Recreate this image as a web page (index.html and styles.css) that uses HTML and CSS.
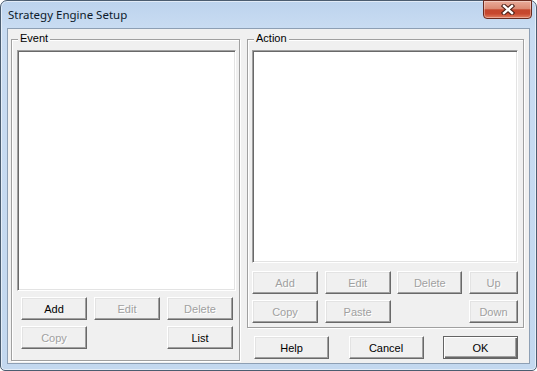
FILE: index.html
```html
<!DOCTYPE html>
<html lang="en">
<head>
    <meta charset="UTF-8">
    <title>Strategy Engine Setup</title>
    <link rel="stylesheet" href="styles.css">
</head>
<body>
    <div class="window">
        <div class="titlebar">
            <span class="title">Strategy Engine Setup</span>
            <button class="close" aria-label="Close">
                <svg width="14" height="11" viewBox="0 0 14 11">
                    <path d="M3 2 L11 9 M11 2 L3 9" stroke="#4a1e16" stroke-width="4.4" stroke-linecap="square"/>
                    <path d="M3 2 L11 9 M11 2 L3 9" stroke="#ffffff" stroke-width="2.4" stroke-linecap="square"/>
                </svg>
            </button>
        </div>

        <div class="client">
            <!-- Event group -->
            <div class="group group-event">
                <span class="caption">Event</span>
                <div class="listbox list-event"></div>
                <div class="btn-grid grid-event">
                    <button class="btn">Add</button>
                    <button class="btn" disabled>Edit</button>
                    <button class="btn" disabled>Delete</button>
                    <button class="btn" disabled>Copy</button>
                    <button class="btn col-3">List</button>
                </div>
            </div>

            <div class="right-col">
                <!-- Action group -->
                <div class="group group-action">
                    <span class="caption">Action</span>
                    <div class="listbox list-action"></div>
                    <div class="btn-grid grid-action">
                        <button class="btn" disabled>Add</button>
                        <button class="btn" disabled>Edit</button>
                        <button class="btn" disabled>Delete</button>
                        <button class="btn" disabled>Up</button>
                        <button class="btn" disabled>Copy</button>
                        <button class="btn" disabled>Paste</button>
                        <button class="btn col-4" disabled>Down</button>
                    </div>
                </div>

                <div class="dialog-buttons">
                    <button class="btn wide">Help</button>
                    <button class="btn wide">Cancel</button>
                    <button class="btn wide default">OK</button>
                </div>
            </div>
        </div>
    </div>
</body>
</html>
```

FILE: styles.css
```css
* {
    box-sizing: border-box;
}
body {
    margin: 0;
    font-family: "Liberation Sans", Arial, sans-serif;
    font-size: 11px;
}

/* window frame */
.window {
    width: 537px;
    height: 371px;
    border: 1px solid #4b5d70;
    border-radius: 7px 7px 5px 5px;
    background: linear-gradient(#bcd3ed, #c9dcf2 28px, #c3d8ef);
    box-shadow: inset 0 0 0 1px rgba(255, 255, 255, 0.55);
    padding: 0 6px 6px;
    display: flex;
    flex-direction: column;
}
.titlebar {
    height: 27px;
    display: flex;
    align-items: flex-start;
    justify-content: space-between;
}
.title {
    font-family: "Noto Sans", sans-serif;
    font-size: 11.5px;
    line-height: 16px;
    color: #0d1a2b;
    margin: 6px 0 0 1px;
}
.close {
    width: 49px;
    height: 19px;
    margin: -1px -2px 0 0;
    padding: 0;
    border: 1px solid #6a2a1f;
    border-radius: 0 0 4px 4px;
    background: linear-gradient(#e9ab9a, #db8a74 45%, #c4472e 52%, #c7482f 75%, #e28062);
    box-shadow: inset 0 0 0 1px rgba(255, 255, 255, 0.35);
    display: flex;
    align-items: center;
    justify-content: center;
}

/* client area */
.client {
    flex: 1;
    background: #f0f0f0;
    border: 1px solid #8d9fb4;
    padding: 10px 5px 1px 3px;
    display: flex;
    align-items: flex-start;
    gap: 7px;
}
.right-col {
    flex: 1;
    display: flex;
    flex-direction: column;
}

/* etched group box */
.group {
    position: relative;
    border: 1px solid #a0a0a0;
    box-shadow: inset 1px 1px 0 #fff, 1px 1px 0 #fff;
}
.caption {
    position: absolute;
    top: -8px;
    left: 6px;
    padding: 0 2px;
    line-height: 13px;
    background: #f0f0f0;
    color: #000;
}
.group-event {
    width: 229px;
    padding: 10px 3px 11px 5px;
}
.group-action {
    padding: 10px 5px 4px 4px;
}

/* sunken list box */
.listbox {
    background: #fff;
    border: 1px solid;
    border-color: #a0a0a0 #fff #fff #a0a0a0;
    box-shadow: inset 1px 1px 0 #696969, inset -1px -1px 0 #e3e3e3;
}
.list-event {
    width: 219px;
    height: 241px;
}
.list-action {
    width: 266px;
    height: 213px;
}

.btn-grid {
    display: grid;
    grid-auto-rows: 23px;
    row-gap: 6px;
    justify-content: space-between;
}
.grid-event {
    grid-template-columns: 66px 66px 66px;
    margin: 6px 3px 0 4px;
}
.grid-action {
    grid-template-columns: 66px 66px 65px 49px;
    margin-top: 8px;
}
.col-3 {
    grid-column: 3;
}
.col-4 {
    grid-column: 4;
}

/* classic 3d push button */
.btn {
    font: inherit;
    color: #000;
    height: 23px;
    padding: 0;
    background: #f0f0f0;
    border: 1px solid;
    border-color: #fff #696969 #696969 #fff;
    box-shadow: inset -1px -1px 0 #a0a0a0, inset 1px 1px 0 #e3e3e3;
}
.btn:disabled {
    color: #a0a0a0;
    text-shadow: 1px 1px 0 #fff;
}
.btn.default {
    border-color: #646464;
    box-shadow: inset 1px 1px 0 #fff, inset -1px -1px 0 #696969, inset -2px -2px 0 #a0a0a0;
}

.dialog-buttons {
    margin-top: 8px;
    padding: 0 6px 0 7px;
    display: flex;
    justify-content: space-between;
}
.btn.wide {
    width: 75px;
}
```
